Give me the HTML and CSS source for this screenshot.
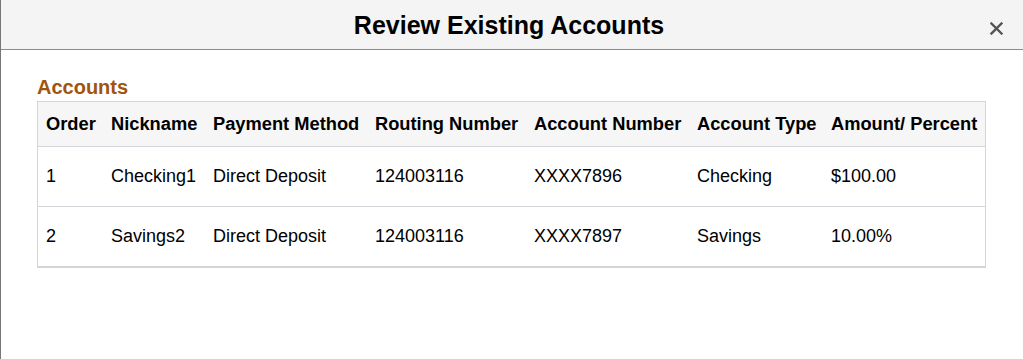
FILE: index.html
```html
<!DOCTYPE html>
<html>
<head>
<meta charset="utf-8">
<link rel="stylesheet" href="styles.css">
</head>
<body>
<div class="modal">
  <div class="modal-header">
    <h1 class="modal-title">Review Existing Accounts</h1>
    <button class="close-btn" aria-label="Close">
      <svg width="13" height="13" viewBox="0 0 13 13"><path d="M1.5 1.5 L11.5 11.5 M11.5 1.5 L1.5 11.5" stroke="#555" stroke-width="2.4" stroke-linecap="square"/></svg>
    </button>
  </div>
  <div class="modal-body">
    <h2 class="section-title">Accounts</h2>
    <div class="grid-wrap">
      <table class="grid">
        <colgroup>
          <col class="c1"><col class="c2"><col class="c3"><col class="c4"><col class="c5"><col class="c6"><col class="c7">
        </colgroup>
        <thead>
          <tr>
            <th>Order</th><th>Nickname</th><th>Payment Method</th><th>Routing Number</th><th>Account Number</th><th>Account Type</th><th>Amount/ Percent</th>
          </tr>
        </thead>
        <tbody>
          <tr>
            <td>1</td><td>Checking1</td><td>Direct Deposit</td><td>124003116</td><td>XXXX7896</td><td>Checking</td><td>$100.00</td>
          </tr>
          <tr>
            <td>2</td><td>Savings2</td><td>Direct Deposit</td><td>124003116</td><td>XXXX7897</td><td>Savings</td><td>10.00%</td>
          </tr>
        </tbody>
      </table>
    </div>
  </div>
</div>
</body>
</html>
```
FILE: styles.css
```css
html, body {
  margin: 0;
  padding: 0;
  background: #fff;
}
body {
  font-family: "Liberation Sans", Arial, sans-serif;
  color: #000;
}
.modal {
  position: relative;
  height: 359px;
  border-left: 1px solid #777;
  box-sizing: border-box;
}
.modal-header {
  position: relative;
  height: 49px;
  background: #f4f4f4;
  border-bottom: 1px solid #8a8a8a;
  display: flex;
  align-items: center;
}
.modal-title {
  flex: 1;
  margin: 0;
  padding-right: 6px;
  text-align: center;
  font-size: 25px;
  font-weight: bold;
  line-height: 28px;
  color: #000;
}
.close-btn {
  position: absolute;
  right: 20px;
  top: 22px;
  width: 13px;
  height: 13px;
  padding: 0;
  border: 0;
  background: none;
  display: block;
}
.close-btn svg {
  display: block;
}
.modal-body {
  padding: 26px 37px 0 36px;
}
.section-title {
  margin: 0 0 2px 0;
  font-size: 20px;
  line-height: 23px;
  font-weight: bold;
  color: #a0540f;
}
.grid-wrap {
  width: 949px;
  border: 1px solid #d2d5d9;
  border-bottom-width: 2px;
  box-sizing: border-box;
}
.grid {
  width: 947px;
  border-collapse: collapse;
  table-layout: fixed;
}
.c1 { width: 65px; }
.c2 { width: 102px; }
.c3 { width: 162px; }
.c4 { width: 159px; }
.c5 { width: 163px; }
.c6 { width: 134px; }
.c7 { width: 162px; }
.grid th, .grid td {
  padding: 0 0 0 8px;
  text-align: left;
  vertical-align: middle;
  white-space: nowrap;
  font-size: 18px;
}
.grid th {
  height: 44px;
  background: #f6f6f6;
  font-weight: bold;
  font-size: 18.3px;
  border-bottom: 1px solid #d2d5d9;
}
.grid td {
  height: 59px;
  font-weight: normal;
}
.grid tbody tr + tr td {
  border-top: 1px solid #d2d5d9;
}
```
